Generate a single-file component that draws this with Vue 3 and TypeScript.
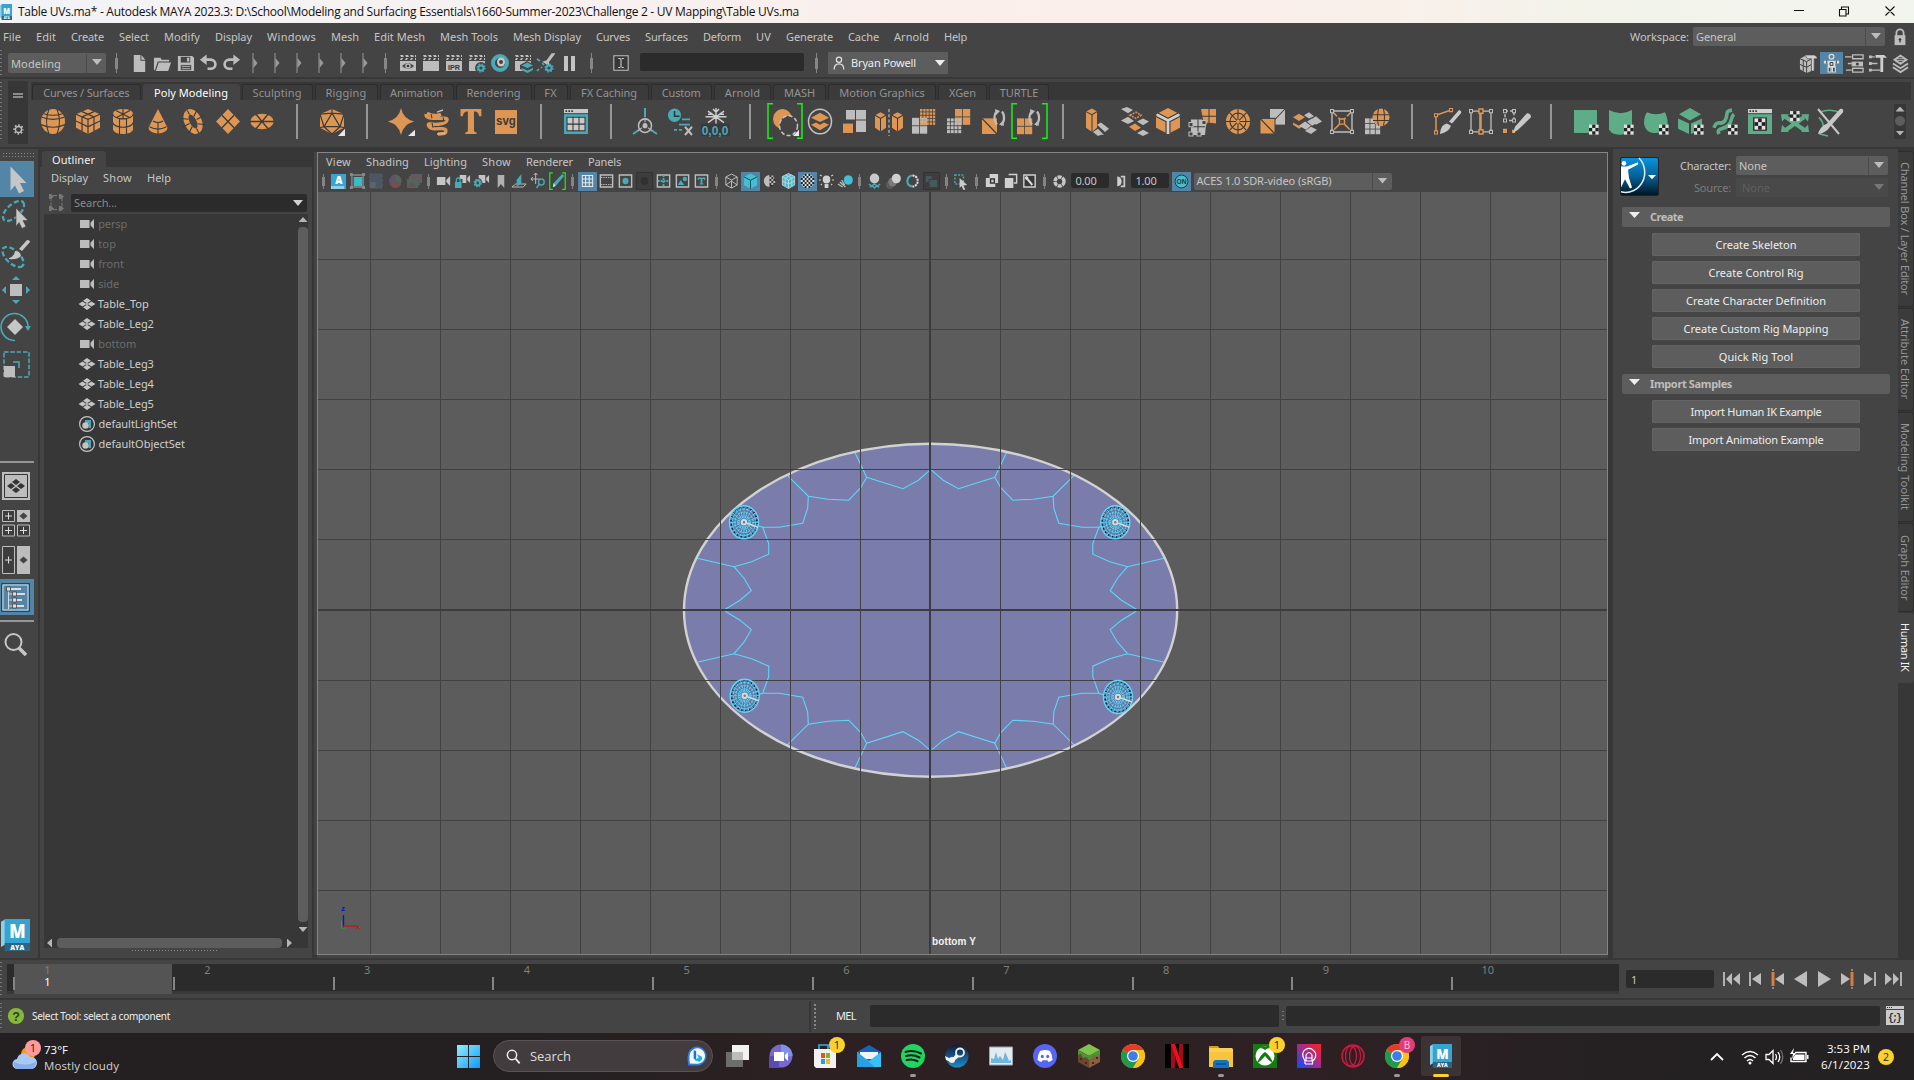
<script setup lang="ts">
import { h } from 'vue'

const O = '#de9654'
const G = '#bdbdbd'
const T = '#49a9b6'
const N = '#5fad88'
const D = '#3a3a3a'

const clap = `<path d="M2 2h3l1 2H3zM7 2h3l1 2H8zM12 2h3l1 2h-3zM3 5h2l-1 2H2zM8 5h2l-1 2H7zM13 5h2l-1 2h-2zM17 2h1v2h-1zM17 5h1v2h-1z" fill="${G}"/><path d="M2 8h16v10H2z" fill="${G}"/>`
const gear = (x: number, y: number, r: number, c: string) =>
  `<circle cx="${x}" cy="${y}" r="${r}" fill="none" stroke="${c}" stroke-width="2"/><circle cx="${x}" cy="${y}" r="${r + 1.3}" fill="none" stroke="${c}" stroke-width="1.4" stroke-dasharray="1.6 ${(((r + 1.3) * 6.283) / 8 - 1.6).toFixed(2)}"/>`
const checker = (x: number, y: number, s = 3.2) => {
  let out = `<rect x="${x}" y="${y}" width="${s * 3}" height="${s * 3}" fill="#e2e2e2"/>`
  for (const [a, b] of [[1, 0], [0, 1], [2, 1], [1, 2]]) out += `<rect x="${x + a * s}" y="${y + b * s}" width="${s}" height="${s}" fill="#222"/>`
  return out
}
const grid = (x: number, y: number, s: number, n: number, c: string) => {
  let out = ''
  const k = s / n
  for (let i = 0; i < n; i++) for (let j = 0; j < n; j++) out += `<rect x="${x + i * k}" y="${y + j * k}" width="${k - 0.8}" height="${k - 0.8}" fill="${c}"/>`
  return out
}
const ballChecks = () => {
  let out = ''
  for (let i = 0; i < 7; i++)
    for (let j = 0; j < 7; j++) {
      const x = 2 + i * 2
      const y = 2 + j * 2
      if ((i + j) % 2 === 0 && Math.hypot(x + 1 - 9, y + 1 - 9) < 6.6) out += `<rect x="${x}" y="${y}" width="2" height="2" fill="#1e2a33"/>`
    }
  return out
}
const spin = `<path d="M15 2a6 8 0 0 0 0 13M20 2.500a6 8 0 0 1-1 13" fill="none" stroke="${G}" stroke-width="2.200"/><path d="M13 0l5 2-4 4zM22 16l-5-1 4-4z" fill="${G}"/>`
const mayaLogo = (top: string) =>
  `<path d="M0 2l4-2v19l-4 2z" fill="#8fd0e6"/><path d="M3 0h21v18H3z" fill="${top}"/><path d="M3 18h21v6H3z" fill="#2b6580"/><text x="13.500" y="14.500" font-family="Open Sans,sans-serif" font-size="14" font-weight="800" fill="#fff" text-anchor="middle">M</text><text x="13.500" y="23" font-family="Open Sans,sans-serif" font-size="5.500" font-weight="800" fill="#fff" text-anchor="middle">AYA</text>`
const chrome = `<circle cx="12" cy="12" r="12" fill="#fbc116"/><path d="M12 12L1.600 6A12 12 0 0 1 22.400 6z" fill="#e33b2e"/><path d="M12 12L1.600 6A12 12 0 0 0 12 24l5.500-9z" fill="#229a4c"/><path d="M12 6h10.400A12 12 0 0 1 12 24l6-10z" fill="#fbc116"/><circle cx="12" cy="12" r="6" fill="#fff"/><circle cx="12" cy="12" r="4.800" fill="#3b7ded"/>`

const icons: Record<string, string> = {
  /* shelf, 24 box */
  sphere: `<circle cx="12" cy="12" r="12" fill="${O}"/><path d="M1 8q11 4 22 0M0 15q12 5 24 0M8 0q-5 12 0 24M16 0q5 12 0 24M3 4.500q9 3 18 0" fill="none" stroke="${D}" stroke-width="1.100"/>`,
  cube: `<path d="M12 0l12 5v13l-12 6-12-6V5z" fill="${O}"/><path d="M0 5l12 5 12-5M12 10v14M6 2.500l12 5V21M18 2.500l-12 5V21M0 11.500l12 5.500 12-5.500" fill="none" stroke="${D}" stroke-width="1.200"/>`,
  cylinder: `<path d="M2 4.500a10 4.500 0 0 1 20 0v15a10 4.500 0 0 1-20 0z" fill="${O}"/><path d="M2 5a10 4.500 0 0 0 20 0M2 13a10 4.500 0 0 0 20 0M8.500 9v15M15.500 9v15M12 0v9.500M5 1.500l14 7M19 1.500l-14 7" fill="none" stroke="${D}" stroke-width="1.100"/>`,
  cone: `<path d="M12 0l9.500 18a9.500 5.500 0 0 1-19 0z" fill="${O}"/><path d="M7 11.500q5 3 10 0M3.500 17q8.500 4.500 17 0M12 13v11" fill="none" stroke="${D}" stroke-width="1.100"/>`,
  torus: `<g transform="rotate(-28 12 12)"><ellipse cx="12" cy="12" rx="6" ry="10" fill="none" stroke="${O}" stroke-width="5.200"/><path d="M0 12h8M16 12h8M12 0v4.500M12 19.500v5M3 4l6 4M21 4l-6 4M3 20l6-4M21 20l-6-4" stroke="${D}" stroke-width="1.100"/></g>`,
  plane: `<path d="M12 0l12 12-12 12L0 12z" fill="${O}"/><path d="M6 6l12 12M18 6L6 18" stroke="${D}" stroke-width="1.300"/>`,
  disc: `<ellipse cx="12" cy="12" rx="11.500" ry="7.500" fill="${O}"/><path d="M0 12h24M6 5l12 14M18 5L6 19" stroke="${D}" stroke-width="1.300"/>`,
  icosa: `<path d="M12 0l12 5v13l-12 6-12-6V5z" fill="${O}"/><path d="M12 4l8 13H4zM12 0v4M0 5l12-1 12 1M0 5l4 12M24 5l-4 12M0 18l4-1 8 7 8-7 4 1" fill="none" stroke="${D}" stroke-width="1.200"/><path d="M25 19v7h-7z" fill="#e8e8e8"/>`,
  star: `<path d="M11 -1q2 10 13 13-11 3-13 13Q9 15-2 12 9 9 11-1z" fill="${O}"/><path d="M25 20v6h-7z" fill="#e8e8e8"/>`,
  spiral: `<path d="M2 4q8 4 14 1M1 5c-1 4 6 4 12 4s10-1 9 2-10 5-17 3M5 14c-4 0-1 5 5 5s11-1 11 2-4 3-8 3" fill="none" stroke="${O}" stroke-width="3.200"/><path d="M12 3l6-2M12 24l8-1" stroke="${G}" stroke-width="1.500"/><path d="M6 5l1 4M18 8l1 4M7 13l1 5" stroke="${D}" stroke-width="1"/>`,
  type: `<path d="M0 0h24v7h-2.500q-1-4.500-5-4.500h-1V20q0 2.500 3 2.500V24h-13v-1.500q3 0 3-2.500V2.500h-1q-4 0-5 4.500H0z" transform="translate(1.500 0) scale(.87 1)" fill="${O}"/>`,
  svg: `<rect x="1" y="1" width="22" height="23" fill="${O}"/><text x="12" y="15.500" text-anchor="middle" font-family="Liberation Sans,sans-serif" font-weight="700" font-size="11.500" fill="#3a3a3a">svg</text>`,
  gridwin: `<path d="M0 0h24v4H0z" fill="#c9c9c9"/><path d="M1.500 1.300h1.600v1.500H1.500zM4.400 1.300H6v1.500H4.400zM7.300 1.300h1.600v1.500H7.300z" fill="#333"/><path d="M0 5h24v19H0z" fill="${T}"/><path d="M2.500 7.500h19v14h-19z" fill="#333"/><path d="M3.500 8.500h5v5.500h-5zM9.500 8.500h5v5.500h-5zM15.500 8.500h5v5.500h-5zM3.500 15h5v5.500h-5zM9.500 15h5v5.500h-5zM15.500 15h5v5.500h-5z" fill="#c9c9c9"/>`,
  target: `<circle cx="12" cy="16" r="6.500" fill="none" stroke="${G}" stroke-width="1.500"/><circle cx="12" cy="16" r="2.500" fill="${G}"/><path d="M12 -1v9M6 20l-6 4M18 20l6 4" stroke="${T}" stroke-width="2"/><path d="M12 9v4M5 21l4-3M19 21l-4-3" stroke="${G}" stroke-width="1"/>`,
  history: `<circle cx="6.500" cy="6" r="6.500" fill="${T}"/><path d="M6.500 2v5h5" fill="none" stroke="#333" stroke-width="1.500"/><path d="M14 10h8M11 15h11M6 20h3M11 20h3" stroke="${T}" stroke-width="1.600"/><path d="M17 17l7 8M24 17l-7 8" stroke="${G}" stroke-width="2"/>`,
  freeze: `<path d="M13 -1v16M5 2l16 11M21 2L5 13M2.500 7.500h21M10 0l3 3 3-3M5 5l3 0M18 5h3" stroke="#d0d0d0" stroke-width="1.400" fill="none"/><rect x="-2" y="14" width="29" height="12" fill="#3a3a3a"/><text x="12" y="24.500" text-anchor="middle" font-family="Liberation Sans,sans-serif" font-weight="700" font-size="12" fill="${T}">0,0,0</text>`,
  bool: `<circle cx="9.500" cy="9.500" r="9.500" fill="${O}"/><ellipse cx="15.500" cy="16" rx="9" ry="9.500" fill="#444" stroke="#c4c4c4" stroke-width="1.500" stroke-dasharray="4 2.200"/><path d="M26 20v6h-6z" fill="#e8e8e8"/><path d="M0-5H-5V28H0M24-5h5V28h-5" fill="none" stroke="#12f312" stroke-width="1.500"/>`,
  combine: `<ellipse cx="12" cy="12" rx="11.500" ry="11.800" fill="none" stroke="#c4c4c4" stroke-width="1.500"/><path d="M3 8.500l9-5 9 5-9 4z" fill="${O}"/><path d="M3 15l5-2 4 2 4-2 5 2-9 5.500z" fill="${O}"/>`,
  separate: `<path d="M4 1h9v9H4zM14 1h10v9H14zM14 11h10v11H14z" fill="${G}"/><path d="M1 14h10v9H1z" fill="${O}"/>`,
  mirror: `<path d="M-2 6l5.500-3L9 6v12l-5.500 3.500L-2 18zM15 6l5.500-3L26 6v12l-5.500 3.500L15 18z" fill="${O}"/><path d="M-2 6l5.500 3L9 6M3.500 9v12.500M15 6l5.500 3L26 6M20.500 9v12.500" fill="none" stroke="${D}"/><path d="M12 0v26" stroke="#d0d0d0" stroke-dasharray="3 2"/>`,
  smooth: `${grid(0, 8.5, 16, 2, G)}${grid(8, 0, 16, 5, O)}`,
  reduce: `${grid(8, 0, 16, 2, O)}${grid(0, 9, 15, 4, G)}`,
  remesh: `<path d="M0 9h15v15H0z" fill="${O}"/><path d="M0 9l15 15" stroke="${D}" stroke-width="1.300"/>${spin}`,
  retopo: `${grid(0, 9, 16, 2, O)}${spin}<path d="M0-5H-5V28H0M25-5h5V28h-5" fill="none" stroke="#12f312" stroke-width="1.500"/>`,
  extrude: `<path d="M0 2.500L6-.500l5 3V18l-5 4-6-4z" fill="${O}"/><path d="M0 2.500l6 3 5-3M6 5.500V22" fill="none" stroke="${D}"/><path d="M11 15l4-2 8 6-4 3zM14 21l4 4-5-1zM7 22l5-3 5 5-5 2z" fill="${G}"/>`,
  bridge: `<path d="M0 0l6-2 6 3-5 3zM16 12l6-3 6 3-6 3.500zM0 11l7-3.500 6 4-6 3zM16 23l6-3 6 3-6 3z" fill="${G}"/><path d="M8 17l6-3 6 4-6 3z" fill="${O}"/><path d="M9 6l6-3 5 3-5 3z" fill="none" stroke="${O}" stroke-width="1.500" stroke-dasharray="2 1"/>`,
  bevel: `<path d="M12-1l12 6v13l-12 6L0 18V5z" fill="${O}"/><path d="M1 5.500l11 5.500 11-5.500M12 11v13" fill="none" stroke="${D}" stroke-width="5"/><path d="M1 5.500l11 5.500 11-5.500M12 11v13" fill="none" stroke="#cfcfcf" stroke-width="2.800"/>`,
  merge: `<path d="M10 0h15v14l-8-1-4 2z" fill="${O}"/><path d="M18 0v13M11 7h14" stroke="${D}"/><path d="M0 10h11l4 5-1 10H0z" fill="${G}"/><path d="M7 10v15M0 17h14" stroke="${D}"/><path d="M-2 13h4v4h-4zM-2 22h4v4h-4zM6 22h4v4H6zM11 11h4v4h-4z" fill="#444" stroke="${G}"/>`,
  wheel: `<circle cx="12" cy="12" r="12" fill="${O}"/><circle cx="12" cy="12" r="8" fill="none" stroke="${D}" stroke-width="1.100"/><path d="M12 0v24M0 12h24M3.500 3.500l17 17M20.500 3.500l-17 17" stroke="${D}" stroke-width="1.100"/><circle cx="12" cy="12" r="1.800" fill="${O}"/>`,
  flip: `<path d="M10 0h15v15H10z" fill="${G}"/><path d="M25 0L10 15" stroke="${D}"/><path d="M0 9h15v15H0z" fill="${O}" stroke="#444"/><path d="M0 9l15 15" stroke="${D}" stroke-width="1.200"/>`,
  collapse: `<path d="M-2 8l6-3.500L10 8l-6 3.500zM-2 13l6 3 6-3v2l-6 4-6-4z" fill="${O}"/><path d="M9 6l5-3 5 4-5 2zM16 10l5-3 6 5-6 3zM4 16l6-4 6 4-5 4zM12 12l5-3 6 4-6 3zM10 21l6-4 6 3-6 4z" fill="${G}"/>`,
  cage: `<path d="M2 2l20 20M22 2L2 22" stroke="${O}" stroke-width="1.500" stroke-dasharray="7 2"/><path d="M2 2h20v20H2z" fill="none" stroke="${G}" stroke-width="1.400"/><path d="M.500.500h3v3h-3zM20.500.500h3v3h-3zM.500 20.500h3v3h-3zM20.500 20.500h3v3h-3z" fill="#444" stroke="${G}"/><path d="M9.500 9.500h5v5h-5z" fill="#444" stroke="${O}" stroke-width="1.400"/>`,
  project: `${grid(0, 9, 16, 3, G)}<circle cx="16" cy="8" r="8.500" fill="${O}"/><path d="M8 5.500h16M8 11h16M13.500 0q-2 8 0 16M18.500 0q2 8 0 16" fill="none" stroke="${D}"/>`,
  multicut: `<path d="M1 22V6L16 1" fill="none" stroke="${O}" stroke-width="1.500"/><path d="M-.500 4.500h3v3h-3zM-.500 21h3v3h-3zM14.500-.500h3v3h-3z" fill="#444" stroke="${O}"/><path d="M5 23q1-8 7-9l4 2q-2 6-11 8zM14 12L24 1q3 1 2 3l-9 10z" fill="#c8c8c8"/>`,
  edgeloop: `<path d="M2 2h9v20H2zM13 2h9v20h-9" fill="none" stroke="${G}" stroke-width="1.300"/><path d="M12 1v22" stroke="${O}" stroke-width="1.500"/><path d="M.500.500h3v3h-3zM20.500.500h3v3h-3zM.500 20.500h3v3h-3zM20.500 20.500h3v3h-3z" fill="#444" stroke="${G}"/><path d="M10 0h4v4h-4zM10 20h4v4h-4z" fill="#444" stroke="${O}" stroke-width="1.400"/>`,
  quaddraw: `<path d="M1 2h9v9H1z" fill="none" stroke="${G}" stroke-width="1.500" stroke-dasharray="3 2"/><path d="M-.500.500h3v3h-3zM8.500.500h3v3h-3zM-.500 9.500h3v3h-3zM8.500 9.500h3v3h-3z" fill="#444" stroke="${G}"/><path d="M-1 19h4v4h-4zM8 20h3v3H8z" fill="${O}"/><path d="M9 23l2-6 12-13q4 0 4 4L14 20z" fill="#c8c8c8"/>`,
  uv1: `<path d="M0 1h23v22H0z" fill="${N}"/>${checker(15, 15)}`,
  uv2: `<path d="M0 1q12 6 23 0v20q-11 6-20 2l-3-3z" fill="${N}"/>${checker(15, 15)}`,
  uv3: `<path d="M3 3q9 4 18 0 4 8 2 15-4 6-14 5-8-1-9-9 0-7 3-11z" fill="${N}"/>${checker(15, 15)}`,
  uv4: `<path d="M12-1l11 6-11 6L1 5zM0 9l11 5v10L0 19zM13 14l11-5v10l-11 5z" fill="${N}"/>${checker(16, 15)}`,
  uv5: `<path d="M1 18c3-9 7-1 11-7s-1-9 7-10M6 24c-3-6 4-4 9-8s2-8 6-11" fill="none" stroke="${N}" stroke-width="3.600"/>${checker(15, 15)}`,
  uv6: `<path d="M0 0h24v4H0z" fill="#d0d0d0"/><path d="M1.500 1.300h1.600v1.500H1.500zM4.400 1.300H6v1.500H4.400zM7.300 1.300h1.600v1.500H7.300z" fill="#333"/><path d="M0 5h24v19H0z" fill="${N}"/><path d="M5 8h14v13H5z" fill="#333"/>${checker(6.5, 9, 3.6)}`,
  uv7: `<path d="M3 8l18 12M21 8L3 20" stroke="${N}" stroke-width="4"/><path d="M-2 5h8l-7 7zM26 5h-8l7 7zM-2 22h8l-7-7zM26 22h-8l7-7z" fill="${N}"/>${checker(7, 2)}`,
  uv8: `<path d="M2 3q10-4 22 1M1 8q8 8 1 16l8 2" fill="none" stroke="${N}" stroke-width="1.500"/><path d="M0 24q2-7 9-10L22 0q4-1 3 3L12 17Q8 23 0 24z" fill="#c8c8c8"/><path d="M0 0l21 24" stroke="#c8c8c8" stroke-width="2"/>`,

  /* status line, 20 box */
  new: `<path d="M4 1h7v6h5v12H4zM12 1l4 5h-4z" fill="${G}"/>`,
  open: `<path d="M1 4h7l1 2h8v2H5l-3 9H1z" fill="${G}"/><path d="M6 9h13l-3 9H3z" fill="${G}"/>`,
  save: `<path d="M2 2h15l2 2v14H2z" fill="${G}"/><path d="M5 3h10v6H5z" fill="#444"/><path d="M11.500 4H14v4h-2.500z" fill="${G}"/><path d="M5 11.500h11V17H5z" fill="#444"/><path d="M6 13h9M6 15.500h9" stroke="${G}"/>`,
  undo: `<path d="M6 6h6a5 4.500 0 0 1 0 9.500h-3" fill="none" stroke="${G}" stroke-width="2.800"/><path d="M1 6l7-5.500v11z" fill="${G}"/>`,
  redo: `<path d="M14 6H8a5 4.500 0 0 0 0 9.500h3" fill="none" stroke="${G}" stroke-width="2.800"/><path d="M19 6l-7-5.500v11z" fill="${G}"/>`,
  chev: `<path d="M8 0v20" stroke="#8a8a8a" stroke-width="1.200"/><path d="M8.500 5l4 5-4 5z" fill="#999"/>`,
  r1: `${clap}<path d="M4 13q6-6 12 0-6 6-12 0z" fill="#444"/><circle cx="10" cy="13" r="2.800" fill="${G}"/><circle cx="10" cy="13" r="1.300" fill="#333"/>`,
  r2: clap,
  r3: `${clap}<text x="10" y="16.500" text-anchor="middle" font-family="Liberation Sans,sans-serif" font-weight="700" font-size="8" textLength="12" lengthAdjust="spacingAndGlyphs" fill="#333">IPR</text>`,
  r4: `${clap}<circle cx="14" cy="15" r="6" fill="#444"/>${gear(14, 15, 2.6, T)}`,
  r5: `<circle cx="10" cy="10" r="7" fill="none" stroke="${T}" stroke-width="4"/><ellipse cx="11" cy="9" rx="4" ry="4.500" fill="#c8c8c8"/><circle cx="11" cy="9" r="2" fill="#444"/>`,
  r6: `${clap}<path d="M7 12l7-4 6 3v5l-6 4-7-4z" fill="#444"/><path d="M8.500 12.500l6-3 5.500 3-5.500 2.500zM8.500 15l6 2.500 5.500-2.500v2l-5.500 3-6-3z" fill="${T}"/>`,
  r7: `<path d="M18 1l-6 8 1 3-5-3 3-1 5-7z" fill="${G}" stroke="${G}" stroke-width="1.500"/><path d="M1 6l3 2M6 10l2 2M1 18l2-2M5 14l1 1" stroke="${T}" stroke-width="1.700"/>${gear(13, 15, 2.6, T)}`,
  r8: `<path d="M5 3h4v15H5zM12 3h4v15h-4z" fill="#c4c4c4"/>`,
  caret: `<path d="M2 2h16v16H2z" fill="#383838" stroke="${G}" stroke-width="1.200"/><path d="M7 5h2l1 1 1-1h2M7 15h2l1-1 1 1h2M10 6v8" fill="none" stroke="#ddd" stroke-width="1.100"/>`,
  user: `<circle cx="10" cy="6" r="3.300" fill="none" stroke="#e4e4e4" stroke-width="1.500"/><path d="M4 18q0-7 6-7t6 7" fill="none" stroke="#e4e4e4" stroke-width="1.500"/>`,
  w1: `<path d="M1 5l7-4 5 2v15l-5 2-7-4z" fill="${G}"/><path d="M1 5l7 3 5-3M8 8v12M4.500 6v12M1 11l7 3 5-3" fill="none" stroke="${D}"/><path d="M6 1h10l3 2v2h-3v13h-3V5H9z" fill="#cfcfcf" stroke="#444" stroke-width=".7"/>`,
  w2: `<circle cx="10" cy="3" r="2.500" fill="#5285a6" stroke="#ddd" stroke-width="1.300"/><path d="M2 7h16v3h-4v4h-8v-4H2z" fill="#dedede"/><path d="M6.500 14h3v5h-3zM11 14h3v5h-3z" fill="#444" stroke="#ddd" stroke-width="1.200"/><path d="M8.500 9h3v3h-3zM5 7v3M15 7v3" fill="none" stroke="#333"/>`,
  w3: `<path d="M0 3h7M3 10h4M1 17h6" stroke="${G}" stroke-width="1.500"/><path d="M8 1h11v4H8zM8 15h11v4H8z" fill="none" stroke="${G}" stroke-width="1.400"/><path d="M7 8h12v5H7z" fill="${G}"/><circle cx="13" cy="10.500" r="1.600" fill="#444"/>`,
  w4: `<path d="M3 3h4M3 10h7M3 17h10" stroke="${G}" stroke-width="1.500"/><path d="M1 1.500h3v3H1zM1 8.500h3v3H1zM1 15.500h3v3H1z" fill="${G}"/><path d="M8 1h9l3 3h-4v15h-3V4H8z" fill="#cfcfcf"/>`,
  w5: `<path d="M2 6l8-5.500L18 6l-8 5.500z" fill="${G}"/><path d="M2 10l8 5 8-5M2 14l8 5 8-5" fill="none" stroke="${G}" stroke-width="2"/><path d="M6 6h8M8 4h4M8 8h4" stroke="${D}"/>`,
  lock: `<path d="M6 9V5.500a4 4 0 0 1 8 0V9" fill="none" stroke="${G}" stroke-width="2"/><path d="M4 8h12v11H4z" fill="${G}"/><path d="M10 11v5M8.500 13h3" stroke="#333" stroke-width="1.400"/>`,
  cog: `<circle cx="10" cy="10" r="5.500" fill="none" stroke="${G}" stroke-width="2.600"/><circle cx="10" cy="10" r="8" fill="none" stroke="${G}" stroke-width="3" stroke-dasharray="3 3.283" stroke-dashoffset="1.500"/>`,

  /* tool box, 32 box */
  arrow: `<path d="M10.500 3.500l16 16.500h-6.500l4 8-5 2.500-4-8-4.500 5z" fill="#c6c6c6"/>`,
  lasso: `<ellipse cx="13.500" cy="11" rx="13" ry="6.500" transform="rotate(-42 13.500 11)" fill="none" stroke="${T}" stroke-width="2.300" stroke-dasharray="5 2.500"/><path d="M16 8l12 12.500h-5l3 6-4 2-3-6-3 4z" fill="#c6c6c6" stroke="#444" stroke-width=".6"/>`,
  paint: `<ellipse cx="13" cy="20" rx="13" ry="6.500" transform="rotate(43 13 20)" fill="none" stroke="${T}" stroke-width="2.300" stroke-dasharray="5 2.500"/><path d="M9 21q5-1 6-7 5 0 6 5-4 4-12 3zM19 12l8-9q3 0 3 2l-8 9z" fill="#c6c6c6"/>`,
  move: `<path d="M10 10h12v12H10z" fill="${G}"/><path d="M16 2l4 4h-8zM16 30l4-4h-8zM2 16l4-4v8zM30 16l-4-4v8z" fill="${T}"/>`,
  rotate: `<path d="M15 8l8 8-8 8-8-8z" fill="#c6c6c6"/><path d="M15 29.500A13.500 13.500 0 1 1 28 15" fill="none" stroke="${T}" stroke-width="1.600"/><path d="M25 15h6l-3 5z" fill="${T}"/>`,
  scale: `<path d="M4 4h25v25H4z" fill="none" stroke="${T}" stroke-width="1.500" stroke-dasharray="4.500 1.800"/><path d="M4 18h11v11H4z" fill="${G}"/><path d="M13 14h6v6" fill="none" stroke="${T}" stroke-width="1.500"/>`,
  lay1: `<path d="M2 2h28v28H2z" fill="${G}"/><path d="M4.500 4.500h23v23h-23z" fill="none" stroke="#333"/><path d="M16 9l4 3-4 3-4-3zM11 13l4 3-4 3-4-3zM21 13l4 3-4 3-4-3zM16 17l4 3-4 3-4-3z" fill="#333"/>`,
  lay2: `<path d="M2.500 3.500h12v11h-12zM2.500 18h12v11h-12zM17.500 18h12v11h-12z" fill="#3d3d3d" stroke="${G}"/><path d="M17 3h13v12H17z" fill="${G}"/><path d="M23.500 5.500l4 3.500-4 3.500-4-3.500z" fill="#444"/><path d="M5 9h7M8.500 5.500v7M5 23.500h7M8.500 20v7M20 23.500h7M23.500 20v7" stroke="#ddd"/>`,
  lay3: `<path d="M2.500 2.500h12v27h-12z" fill="#3d3d3d" stroke="${G}"/><path d="M17 2h13v28H17z" fill="${G}"/><path d="M23.500 12.500l4 3.500-4 3.500-4-3.500z" fill="#444"/><path d="M5 16h7M8.500 12.500v7" stroke="#ddd"/>`,
  lay4: `<path d="M1.500 2.500h28v28h-28z" fill="none" stroke="#2c4152"/><path d="M3 4h25v25H3z" fill="none" stroke="#d8d8d8"/><path d="M8.500 10v18M9 13h4M9 19h4M9 25h4" stroke="#d8d8d8"/><path d="M11 8h10M16 13h9M16 19h6M16 25h8" stroke="#ddd" stroke-width="2"/><path d="M6.500 6h4v4h-4zM12.500 11h4v4h-4zM12.500 17h4v4h-4zM12.500 23h4v4h-4z" fill="#ddd" stroke="#333" stroke-width=".7"/>`,
  find: `<circle cx="13.500" cy="13" r="8" fill="none" stroke="#c6c6c6" stroke-width="2"/><path d="M19 19l7 7" stroke="#c6c6c6" stroke-width="3.500"/>`,

  /* outliner, 16 box */
  cam: `<path d="M0 4h9.500v8H0zM10.500 6.500L14 3v10l-3.500-3.500z" fill="${G}"/>`,
  mesh: `<path d="M8 2l4 2.700-4 2.600-4-2.600zM3.500 5.400L7.500 8l-4 2.600L-.500 8zM12.500 5.400l4 2.600-4 2.600-4-2.600zM8 8.700l4 2.600L8 14l-4-2.700z" fill="#c4c4c4"/><circle cx="8" cy="8" r="1" fill="#c4c4c4"/>`,
  set: `<circle cx="8" cy="8" r="7.400" fill="none" stroke="#c4c4c4" stroke-width="1.200"/><path d="M6 4h6v8H9.500V7H6z" fill="${T}"/><circle cx="6.500" cy="9.500" r="3.200" fill="#c4c4c4"/>`,
  filt: `<path d="M2 2v11M13 2v11M4 .500h6M4 14.500h6" stroke="#777" stroke-width="1" stroke-dasharray="4 1.500"/><path d="M0-1h2l3 2.500-3 2.500H0zM10-1h2l3 2.500-3 2.500h-2zM0 11h2l3 2.500L2 16H0zM10 11h2l3 2.500-3 2.500h-2z" fill="#777"/>`,

  /* panel toolbar, 18 box */
  v1: `<path d="M1 2h16v15H1z" fill="#3aa3d0"/><path d="M1 14h14v3H1z" fill="#8fd0e6"/><text x="9.500" y="12.500" text-anchor="middle" font-family="Open Sans,sans-serif" font-weight="800" font-size="10.500" fill="#fff">A</text>`,
  v2: `<path d="M3 3h12v12H3z" fill="none" stroke="#777" stroke-width="2"/><path d="M5 5h9v9H5z" fill="#35bcc8"/><path d="M1 1h3v3H1zM14 1h3v3h-3zM1 14h3v3H1zM14 14h3v3h-3z" fill="#888"/>`,
  v3: `<path d="M2 2h13v14H2z" fill="#4c5562" stroke="#565f6c" stroke-dasharray="3 1.500"/><path d="M2 10h6v6H2z" fill="#5c6470"/>`,
  v4: `<circle cx="9" cy="9" r="6.500" fill="#566358"/><path d="M9 9V2.500a6.500 6.500 0 0 0-6 9z" fill="#5c5468"/><path d="M9 9l6 3a6.500 6.500 0 0 1-12 0z" fill="#72504f"/>`,
  v5: `<path d="M5 2h12v9H5z" fill="#5c5c62"/><path d="M3 4h12v9H3z" fill="#66595a"/><path d="M1 7h12v9H1z" fill="#4e6660"/><path d="M2 15l4-5 5 5z" fill="#6b5151"/>`,
  v6: `<path d="M2 5h9v8H2zM12 8l4-4v10l-4-4z" fill="#c4c4c4"/>`,
  v7: `<path d="M6 3h7v8H6zM14 6l3-3v8l-3-3z" fill="#c4c4c4"/><path d="M0 7h9v10H0z" fill="#444"/><path d="M1 10h7v6H1z" fill="${T}"/><path d="M2.500 10V8a2 2 0 0 1 4 0v2" stroke="${T}" stroke-width="1.300" fill="none"/>`,
  v8: `<path d="M6 3h7v8H6zM14 6l3-3v8l-3-3z" fill="#c4c4c4"/><circle cx="5" cy="11" r="5" fill="#444"/>${gear(5, 11, 2.4, T)}`,
  v9: `<path d="M6 3h7v13l-3.500-4L6 16z" fill="#b0b0b0"/>`,
  v10: `<path d="M1 15l4-3h11l-3 3z" fill="none" stroke="${G}"/><path d="M6 12V8l5-6v9l-5 4z" fill="${T}"/>`,
  v11: `<path d="M6 1v11M1 7h9M4 3l2-2 2 2M3 5L1 7l2 2" fill="none" stroke="${G}"/><circle cx="12" cy="10" r="3" fill="none" stroke="${T}" stroke-width="1.500"/><path d="M9.500 12.500L7 16" stroke="${T}" stroke-width="1.700"/>`,
  v12: `<path d="M4 15l1-4 9-9 2 2-9 10z" fill="${T}"/><path d="M4 15l1-4 2 3z" fill="#ddd"/><path d="M4 .800H.800v16.500H4M14 .800h3.200v16.500H14" fill="none" stroke="#12f312" stroke-width="1.300"/>`,
  v13: `<path d="M3.500 3.500h11v11h-11zM7 3.500v11M10.800 3.500v11M3.500 7h11M3.500 10.800h11" fill="none" stroke="#e8e8e8" stroke-width="1.100"/>`,
  v14: `<path d="M2.500 3h13v12h-13z" fill="#444" stroke="${G}" stroke-width="1.500"/><path d="M3 5.500h12M3 12.500h12" stroke="${G}" stroke-dasharray="1.500 1"/>`,
  v15: `<path d="M2.500 3h13v12h-13z" fill="#444" stroke="${G}" stroke-width="1.500"/><circle cx="9" cy="9" r="3.200" fill="${T}"/>`,
  v16: `<path d="M.500.500h17v17H.500z" fill="#3d3d3d" stroke="#333"/><circle cx="9" cy="9" r="4" fill="#303030"/>`,
  v17: `<path d="M2.500 3h13v12h-13z" fill="#444" stroke="${G}" stroke-width="1.500"/><path d="M9 3v12M3 9h12" stroke="${T}" stroke-width="2" stroke-dasharray="2 1"/>`,
  v18: `<path d="M2.500 3h13v12h-13z" fill="#444" stroke="${G}" stroke-width="1.500"/><path d="M4 13l3-5 4 5z" fill="${T}"/><circle cx="11.500" cy="7" r="2.300" fill="${T}"/>`,
  v19: `<path d="M2.500 3h13v12h-13z" fill="#444" stroke="${G}" stroke-width="1.500"/><path d="M5 5.500h8V8h-1l-.500-1H10v4.500h1v1H7v-1h1V7H6.500L6 8H5z" fill="${T}"/>`,
  v20: `<path d="M9 2l6 3v8l-6 3-6-3V5zM3 5l6 3 6-3M9 8v8M3 13l6-4 6 4" fill="none" stroke="${G}"/>`,
  v21: `<path d="M9 1.500l7 3.300v8.500L9 16.800l-7-3.500V4.800z" fill="#42bfd0"/><path d="M2 4.800l7 3.500 7-3.500M9 8.300v8.500" fill="none" stroke="#1d4a57"/>`,
  v22: `<circle cx="9" cy="9" r="6" fill="#333"/><path d="M9 3a6 6 0 0 0 0 12z" fill="${G}"/><path d="M9 5h2v2H9zM11 7h2v2h-2zM9 9h2v2H9zM11 11h2v2h-2zM11 3.500h2V5h-2zM13 5h1v2h-1zM13 9h2v2h-2z" fill="${G}"/>`,
  v23: `<path d="M9 1.500l6.500 3v8.500L9 16.500 2.500 13V4.500z" fill="#42bfd0"/><path d="M9 1.500l6.500 3v8.500L9 16.500 2.500 13V4.500zM2.500 4.500L9 8l6.500-3.500M9 8v8M6 3l6.500 3v8M12 3L5.500 6v8M2.500 9L9 12l6.500-3" fill="none" stroke="#c8d4d6" stroke-width=".9"/>`,
  v24: `<circle cx="9" cy="9" r="7.200" fill="#d6dcdf"/>${ballChecks()}`,
  v25: `<circle cx="9" cy="7.500" r="4" fill="#d0d0d0"/><path d="M7 12h4v4H7z" fill="#d0d0d0"/><path d="M1 8h2M15 8h2M2 3l2 1M16 3l-2 1M3 13l1-1M15 13l-1-1" stroke="#d0d0d0" stroke-width="1.200"/>`,
  v26: `<circle cx="12" cy="8" r="4.800" fill="#42bfd0"/><path d="M3 10l6 5M1 12l5 3M5 8l3 5" stroke="${G}" stroke-width="1.400"/>`,
  v27: `<circle cx="9" cy="6.500" r="5" fill="#c8c8c8"/><path d="M3 12l3 2 3-2 3 2 3-2M4 15l3-1 2 2 2-2 3 1" fill="none" stroke="${T}" stroke-width="1.500"/>`,
  v28: `<circle cx="5" cy="13" r="4" fill="#5a5a5a"/><circle cx="8" cy="10" r="4.500" fill="#7a7a7a"/><circle cx="12" cy="6.500" r="4.800" fill="#cfcfcf"/>`,
  v29: `<path d="M9 3.500a5.500 5.500 0 0 0 0 11" fill="none" stroke="${T}" stroke-width="2.200"/><path d="M9 3.500a5.500 5.500 0 0 1 0 11" fill="none" stroke="#ddd" stroke-width="2.200" stroke-dasharray="2.200 .8"/>`,
  v30: `<path d="M.500.500h17v17H.500z" fill="#3d3d3d" stroke="#333"/><path d="M3 4h6v3H6v3H3zM7 8h8v7H7z" fill="#46595c"/>`,
  v31: `<path d="M2 3h9v9H2z" fill="none" stroke="${T}" stroke-width="1.500" stroke-dasharray="2 1.500"/><path d="M7 6l8 7-4 .500 2 4-2 .500-2-4-2 2z" fill="#ccc"/>`,
  v32: `<path d="M7 2h9v9h-3v4H3V6h4z" fill="#d0d0d0"/><path d="M8 7h4v4H8z" fill="none" stroke="#333" stroke-width="1.500"/>`,
  v33: `<path d="M7 2.500h8.500V11h-3" fill="none" stroke="#d0d0d0" stroke-width="1.500"/><path d="M3 6h9v10H3z" fill="#d0d0d0"/>`,
  v34: `<path d="M3 3h12v12H3z" fill="#383838" stroke="#d0d0d0" stroke-width="1.500"/><path d="M5 5l7 8" stroke="#ddd" stroke-width="2"/><circle cx="6" cy="6" r="1.800" fill="#ddd"/>`,
  v35: `<circle cx="9" cy="9" r="4.800" fill="none" stroke="#c8c8c8" stroke-width="3.600" stroke-dasharray="4.200 .82"/>`,
  v36: `<path d="M11 3h5v13h-5v-2h3V5h-3z" fill="#c8c8c8"/><path d="M7 4a5 5.500 0 0 1 0 11z" fill="#d0d0d0"/>`,
  v37: `<circle cx="9" cy="9" r="6.800" fill="#42bfd0" stroke="#2c3338"/><text x="9" y="11.500" text-anchor="middle" font-family="Liberation Sans,sans-serif" font-weight="700" font-size="7" fill="#263238">ON</text>`,

  /* playback, 20 box */
  p1: `<path d="M2 3v14" stroke="${G}" stroke-width="1.800"/><path d="M10 4v12l-6-6zM18 4v12l-7-6z" fill="${G}"/>`,
  p2: `<path d="M5 3v14" stroke="${G}" stroke-width="1.800"/><path d="M16 4v12l-9-6z" fill="${G}"/>`,
  p3: `<path d="M5 3v14" stroke="#d87c3f" stroke-width="3"/><path d="M5 0v2M5 18v2" stroke="#ccc"/><path d="M16 4v12l-9-6z" fill="${G}"/>`,
  p4: `<path d="M16 2v16L3 10z" fill="${G}"/>`,
  p5: `<path d="M4 2v16l13-8z" fill="${G}"/>`,
  p6: `<path d="M15 3v14" stroke="#d87c3f" stroke-width="3"/><path d="M15 0v2M15 18v2" stroke="#ccc"/><path d="M4 4v12l9-6z" fill="${G}"/>`,
  p7: `<path d="M15 3v14" stroke="${G}" stroke-width="1.800"/><path d="M4 4v12l9-6z" fill="${G}"/>`,
  p8: `<path d="M18 3v14" stroke="${G}" stroke-width="1.800"/><path d="M10 4v12l6-6zM2 4v12l7-6z" fill="${G}"/>`,
  script: `<path d="M1 0h18v3H1z" fill="#ccc"/><path d="M2 1h1v1H2zM4 1h1v1H4zM6 1h1v1H6z" fill="#333"/><path d="M1 4h18v15H1z" fill="#ccc"/><text x="10" y="14.500" text-anchor="middle" font-family="Liberation Mono,monospace" font-weight="700" font-size="10" textLength="14" fill="#333">{;}</text>`,
  help: `<circle cx="10" cy="10" r="9" fill="#86b83a"/><text x="10" y="15" text-anchor="middle" font-family="Liberation Sans,sans-serif" font-weight="700" font-size="14" fill="#2f3b1c">?</text>`,

  /* task bar, 24 box */
  win: `<defs><linearGradient id="wg" x1="0" y1="0" x2="1" y2="1"><stop offset="0" stop-color="#8df0fb"/><stop offset="1" stop-color="#1398fb"/></linearGradient></defs><path d="M0 0h11.500v11.500H0zM12.500 0H24v11.500H12.500zM0 12.500h11.500V24H0zM12.500 12.500H24V24H12.500z" fill="url(#wg)"/>`,
  mag: `<circle cx="10.500" cy="10.500" r="7" fill="none" stroke="#eee" stroke-width="2.200"/><path d="M15.500 15.500L22 23" stroke="#eee" stroke-width="2.600"/>`,
  bing: `<path d="M1.500 23q-2-12 1-17A11.300 11.300 0 1 1 12 23.300H1.500z" fill="#2e7de0"/><path d="M3.500 21q-1.500-10 1-14A9.300 9.300 0 1 1 12 21.300z" fill="#f4f8ff"/><path d="M8 5l3 1v11l-3-2z" fill="#1976d8"/><path d="M9 17l3-2 2-1-2-4 6 3q1 4-3 6z" fill="#20b5d8"/>`,
  taskview: `<path d="M7 1h17v15H7z" fill="#f2f2f2"/><path d="M1 8h17v15H1z" fill="#6d6d6d"/><path d="M7 8h11v8H7z" fill="#bcbcbc"/>`,
  chat: `<circle cx="12" cy="12" r="11.500" fill="#7868cf"/><path d="M0 24V12h10v12z" fill="#5a4ab4"/><path d="M12 .500A11.500 11.500 0 0 1 23.500 12L12 14z" fill="#7f8fea"/><path d="M5 8h10v9H5zM16 11l3-3v9l-3-3z" fill="#fff"/>`,
  store: `<path d="M6 6V1h9v5" fill="none" stroke="#2fb1f0" stroke-width="1.600"/><path d="M1 5h22v19H3l-2-2z" fill="#f1f1f1"/><path d="M8 9h4v5H8z" fill="#f04e25"/><path d="M13 9h4v5h-4z" fill="#7db81f"/><path d="M8 15h4v5H8z" fill="#1aa0ea"/><path d="M13 15h4v5h-4z" fill="#f9b810"/>`,
  mail: `<path d="M0 8l12-7 12 7v15H0z" fill="#1467b8"/><path d="M3 8h18v7H3z" fill="#f3f3f3"/><path d="M0 8l12 9L24 8v15H0z" fill="#37c1f5"/><path d="M0 8l18 15H0z" fill="#2aa0e4"/>`,
  spotify: `<circle cx="12" cy="12" r="12" fill="#1fd661"/><path d="M4.500 8q8-2.500 15.500 1.500M5 12q7-2 13.500 1.500M5.500 16q6-1.600 11 1.200" fill="none" stroke="#1a1a1a" stroke-width="2" stroke-linecap="round"/>`,
  steam: `<defs><linearGradient id="sg" x1="0" y1="0" x2="0" y2="1"><stop offset="0" stop-color="#10183c"/><stop offset="1" stop-color="#1c8ec8"/></linearGradient></defs><circle cx="12" cy="12" r="11.500" fill="url(#sg)"/><circle cx="15" cy="8.500" r="4" fill="none" stroke="#f2f2f2" stroke-width="1.800"/><path d="M11 10L7 15l2 2 5-4" fill="#f2f2f2"/><circle cx="7" cy="16" r="3" fill="#f2f2f2"/><path d="M0 12l6 3v3l-5-2z" fill="#f2f2f2"/>`,
  monitor: `<path d="M.500 3h23v18H.500z" fill="#e4ebf0" stroke="#9aa4ab"/><path d="M2 19v-5l3 1 2-7 2 7 2-3 3 4 2-8 2 4 2 5 2-1v3z" fill="#6db6e0"/>`,
  discord: `<circle cx="12" cy="12" r="12" fill="#5766f2"/><path d="M7 7q5-2 10 0 2.500 4 2.500 9-2 1.700-4 2l-1-1.700h-5L8.500 18q-2-.300-4-2 0-5 2.500-9z" fill="#fff"/><ellipse cx="9.300" cy="12.500" rx="1.500" ry="1.800" fill="#5766f2"/><ellipse cx="14.700" cy="12.500" rx="1.500" ry="1.800" fill="#5766f2"/>`,
  minecraft: `<path d="M1 6l11-6 11 6-11 6z" fill="#7fc24c"/><path d="M1 6l11 6v12L1 18z" fill="#6b4630"/><path d="M23 6l-11 6v12l11-6z" fill="#8a5f3f"/><path d="M1 6l11 6v4l-3-3-3 1-2-4-3 1zM23 6l-11 6v4l3-2 2-3 3 1 3-2z" fill="#4f9434"/><path d="M3 14h2v2H3zM8 18h2v2H8zM15 18h2v2h-2zM19 13h2v2h-2z" fill="#3f2a1e"/>`,
  chrome,
  netflix: `<path d="M0 0h24v24H0z" fill="#000"/><path d="M6 0h4v24H6zM14 0h4v24h-4z" fill="#a80a13"/><path d="M6 0h4l8 24h-4z" fill="#e8121e"/>`,
  folder: `<path d="M0 2h9l2 3H0z" fill="#d99b13"/><path d="M0 5q0-1 1-1h22l1 1v18H0z" fill="#fbcf51"/><path d="M0 8h24v15H0z" fill="#f8c33f"/><path d="M4 24v-6l2-2h12l2 2v6z" fill="#1273c4"/><path d="M7 19h10v2H7z" fill="#0a5598"/>`,
  xbox: `<path d="M0 0h24v24H0z" fill="#137c13"/><circle cx="12" cy="12" r="9.500" fill="#fff"/><path d="M4 19q3-8 8-11 5 3 8 11-3-1-8-7-5 6-8 7zM6 4q4 0 6 2 2-2 6-2-6-3-12 0z" fill="#137c13"/>`,
  head: `<defs><linearGradient id="hg" x1="0" y1="1" x2="1" y2="0"><stop offset="0" stop-color="#0a4cff"/><stop offset=".5" stop-color="#a12c90"/><stop offset="1" stop-color="#ff2020"/></linearGradient></defs><path d="M0 0h24v24H0z" fill="url(#hg)"/><path d="M8 20v-3Q3 9 8.500 5.500T18.500 9q1 5-3 8v3M9 17v-6q3-5 6 0v6M8 20h8M9 14h6M9 17h6" fill="none" stroke="#fff" stroke-width="1.200"/>`,
  opera: `<circle cx="12" cy="12" r="11" fill="none" stroke="#cc1840" stroke-width="1.600"/><ellipse cx="10" cy="12" rx="5.500" ry="10" fill="none" stroke="#cc1840" stroke-width="1.300"/><ellipse cx="14" cy="12" rx="5.500" ry="10" fill="none" stroke="#cc1840" stroke-width="1.300"/>`,
  maya: mayaLogo('#36a4d2'),
  weather: `<circle cx="15" cy="7" r="7" fill="#f19a1e"/><path d="M5 22a5 5 0 0 1-1-10 7 7 0 0 1 13-2 6 6 0 0 1 2 12z" fill="#a9c8f5"/><path d="M5 22a5 5 0 0 1-4-7q10 5 22 0 0 5-4 7z" fill="#87aee8"/>`,
  up: `<path d="M6 15l6-6 6 6" fill="none" stroke="#fff" stroke-width="1.800"/>`,
  wifi: `<path d="M4 10q8-7 16 0M6.500 13q5.500-5 11 0M9 16q3-3 6 0" fill="none" stroke="#fff" stroke-width="1.500"/><circle cx="12" cy="18" r="1.500" fill="#fff"/>`,
  vol: `<path d="M4 9.500h3l4-4v13l-4-4H4z" fill="none" stroke="#fff" stroke-width="1.300"/><path d="M13.500 9q2 3 0 6M16 7q3.500 5 0 10" fill="none" stroke="#fff" stroke-width="1.300"/><path d="M18.500 5q4.500 7 0 14" fill="none" stroke="#777" stroke-width="1.200"/>`,
  batt: `<path d="M9 7.500h11v9H5v-4" fill="none" stroke="#fff" stroke-width="1.400"/><path d="M9.500 9.500h9v5.500H7v-2z" fill="#fff"/><path d="M21 10h1.500v4H21z" fill="#fff"/><path d="M8 3l-4 6h3l-1 5 4-6H7z" fill="#fff"/>`,
}

const Ico = (p: { n: string; b?: number; s?: number; w?: number }) =>
  h('svg', {
    class: 'ico',
    viewBox: `0 0 ${p.b ?? 24} ${p.b ?? 24}`,
    width: p.w ?? p.s ?? p.b ?? 24,
    height: p.s ?? p.b ?? 24,
    preserveAspectRatio: 'none',
    innerHTML: icons[p.n],
  })
Ico.props = ['n', 'b', 's', 'w']

/* Tracks text out (or in) so that a label fills the given length. */
const vFit = {
  mounted(el: HTMLElement, { value, arg }: { value: number; arg?: string }) {
    const range = document.createRange()
    range.selectNodeContents(el)
    const box = range.getBoundingClientRect()
    const size = arg === 'v' ? box.height : box.width
    el.style.letterSpacing = `${(value - size) / (el.textContent ?? ' ').length}px`
  },
}

type Label = [string, number]
const menus: Label[] = [['File', 18], ['Edit', 20], ['Create', 33], ['Select', 30], ['Modify', 36], ['Display', 37], ['Windows', 49], ['Mesh', 28], ['Edit Mesh', 51], ['Mesh Tools', 58], ['Mesh Display', 68], ['Curves', 34], ['Surfaces', 43], ['Deform', 38], ['UV', 15], ['Generate', 47], ['Cache', 31], ['Arnold', 35], ['Help', 23]]
const fileIcons = ['new', 'open', 'save', 'undo', 'redo']
const renderIcons = ['r1', 'r2', 'r3', 'r4', 'r5', 'r6', 'r7', 'r8']
const rightIcons = ['w1', 'w2', 'w3', 'w4', 'w5']
const tabs: [string, number, number][] = [['Curves / Surfaces', 108.5, 86], ['Poly Modeling', 97, 74], ['Sculpting', 71, 49], ['Rigging', 63, 41], ['Animation', 74, 53], ['Rendering', 76, 54], ['FX', 34, 12.5], ['FX Caching', 79, 56], ['Custom', 61.5, 39], ['Arnold', 57, 35.5], ['MASH', 53, 31], ['Motion Graphics', 108, 85.5], ['XGen', 49, 27], ['TURTLE', 60, 38.5]]
const shelf = ['sphere', 'cube', 'cylinder', 'cone', 'torus', 'plane', 'disc', '|', 'icosa', '|', 'star', 'spiral', 'type', 'svg', '|', 'gridwin', '|', 'target', 'history', 'freeze', '|', 'bool', 'combine', 'separate', 'mirror', 'smooth', 'reduce', 'remesh', 'retopo', '|', 'extrude', 'bridge', 'bevel', 'merge', 'wheel', 'flip', 'collapse', 'cage', 'project', '|', 'multicut', 'edgeloop', 'quaddraw', '|', 'uv1', 'uv2', 'uv3', 'uv4', 'uv5', 'uv6', 'uv7', 'uv8']
const tools = ['arrow', 'lasso', 'paint', 'move', 'rotate', 'scale']
const layouts = ['lay1', 'lay2', 'lay3', 'lay4']
const nodes: [string, string, number][] = [['cam', 'persp', 29], ['cam', 'top', 18], ['cam', 'front', 26], ['cam', 'side', 21], ['mesh', 'Table_Top', 51], ['mesh', 'Table_Leg2', 56], ['cam', 'bottom', 38], ['mesh', 'Table_Leg3', 56], ['mesh', 'Table_Leg4', 56], ['mesh', 'Table_Leg5', 56], ['set', 'defaultLightSet', 78.5], ['set', 'defaultObjectSet', 86.5]]
const outMenus: Label[] = [['Display', 37], ['Show', 29], ['Help', 24]]
const panelMenus: Label[] = [['View', 25], ['Shading', 43], ['Lighting', 43], ['Show', 29], ['Renderer', 47], ['Panels', 33]]
const panelIcons = '| v1 v2 v3 v4 v5 | v6 v7 v8 v9 v10 v11 v12 | v13 v14 v15 v16 v17 v18 v19 | v20 v21 v22 v23 v24 v25 v26 | v27 v28 v29 v30 | v31 | v32 v33 v34 |'.split(' ')
const lit = ['v13', 'v21', 'v24']
const createButtons: Label[] = [['Create Skeleton', 81], ['Create Control Rig', 95], ['Create Character Definition', 140], ['Create Custom Rig Mapping', 145], ['Quick Rig Tool', 74.5]]
const importButtons: Label[] = [['Import Human IK Example', 131], ['Import Animation Example', 135]]
const sideTabs: [string, number, number][] = [['Channel Box / Layer Editor', 155.5, 133], ['Attribute Editor', 103, 80], ['Modeling Toolkit', 110.5, 87], ['Graph Editor', 88.5, 65.5], ['Human IK', 70, 48.5]]
const play = ['p1', 'p2', 'p3', 'p4', 'p5', 'p6', 'p7', 'p8']
const tasks = ['taskview', 'chat', 'store', 'mail', 'spotify', 'steam', 'monitor', 'discord', 'minecraft', 'chrome', 'netflix', 'folder', 'xbox', 'head', 'opera', 'chrome', 'maya']
const badges: Record<number, string> = { 2: '1', 12: '1', 15: 'B' }
const running = [4, 11, 15]

/* scene */
const vLines = Array.from({ length: 18 }, (_, i) => 370.5 + i * 70).filter((x) => Math.abs(x - 930) > 5)
const hLines = Array.from({ length: 10 }, (_, i) => 259.5 + i * 70).filter((y) => Math.abs(y - 610) > 5).map((y) => (y > 610 ? y + 1 : y))
const seams = [
  'M-75.300-158.300L-63.300-133-27-121.500-11.700-130 0-140',
  'M-143.300-135.500L-121.700-114-102-111-81.300-110-69.300-122.500-63.300-133',
  'M-121.700-114L-122.300-102-127.300-87-150.700-83-167.300-83-161.300-66.500-161.300-56-178.300-48.500-196-43.500-232.700-52',
  'M-196-43.500L-186-32-178.700-19.500-190-10-204.700-1',
  'M-167.300-83L-173-85',
]
const quadrants = ['', 'translate(1.5 0) scale(-1 1)', 'scale(1 -1)', 'translate(1.5 0) scale(-1 -1)']
const legs = [[744, 522.3], [744.7, 695.7], [1115.3, 522.3], [1118, 697]]
const spokes = Array.from({ length: 20 }, (_, i) => {
  const a = (i * Math.PI) / 10
  return `M${(4 * Math.cos(a)).toFixed(1)} ${(4 * Math.sin(a)).toFixed(1)}L${(14.5 * Math.cos(a)).toFixed(1)} ${(16.5 * Math.sin(a)).toFixed(1)}`
}).join('')
</script>

<template>
  <div class="app">
    <header class="title">
      <Ico n="maya" :s="16" :w="12" />
      <span v-fit="781">Table UVs.ma* - Autodesk MAYA 2023.3: D:\School\Modeling and Surfacing Essentials\1660-Summer-2023\Challenge 2 - UV Mapping\Table UVs.ma</span>
      <svg class="wbtns" viewBox="0 0 110 20" width="110" height="20">
        <path d="M5 8.500h10M50.500 7.500h6.500v6.500h-6.500zM52.500 7V5h7v7H57.500M96.500 4.500l9 9M105.500 4.500l-9 9" fill="none" stroke="#111" stroke-width="1.100" />
      </svg>
    </header>

    <nav class="menubar">
      <span v-for="[t, w] in menus" :key="t" v-fit="w">{{ t }}</span>
      <div class="workspace">
        <span v-fit="59">Workspace:</span>
        <div class="combo ws"><span v-fit="40">General</span><i class="arr"></i></div>
        <Ico n="lock" :b="20" :s="18" />
      </div>
    </nav>

    <div class="status">
      <i class="dots"></i>
      <div class="combo mode"><span v-fit="50">Modeling</span><i class="arr"></i></div>
      <i class="grip g1"></i>
      <div class="group"><Ico v-for="i in fileIcons" :key="i" :n="i" :b="20" :s="19" /></div>
      <div class="chevs"><Ico v-for="i in 6" :key="i" n="chev" :b="20" /></div>
      <i class="grip g2"></i>
      <div class="group rend"><Ico v-for="i in renderIcons" :key="i" :n="i" :b="20" :s="20" /></div>
      <i class="grip g3"></i>
      <Ico n="caret" :b="20" :s="18" class="caret" />
      <div class="field status-field"></div>
      <i class="grip g4"></i>
      <div class="user"><Ico n="user" :b="20" :s="16" /><span v-fit="65">Bryan Powell</span><i class="arr"></i></div>
      <div class="right-icons"><span v-for="i in rightIcons" :key="i" :class="{ on: i === 'w2' }"><Ico :n="i" :b="20" :s="19" /></span></div>
    </div>
    <div class="rule"></div>

    <section class="shelf">
      <i class="dots"></i>
      <div class="shelf-ctl"><i class="burger"></i><Ico n="cog" :b="20" :s="11" /></div>
      <div class="shelf-main">
        <div class="tabs">
          <div v-for="([t, w, f], i) in tabs" :key="t + i" class="tab" :class="{ active: i === 1 }" :style="{ width: w + 'px' }"><span v-fit="f">{{ t }}</span></div>
        </div>
        <div class="shelf-row">
          <div class="cells">
            <span v-for="(i, k) in shelf" :key="k" class="cell"><i v-if="i === '|'" class="sep"></i><Ico v-else :n="i" :s="25" :w="24" /></span>
          </div>
          <div class="scrollbox"><i class="tri up"></i><i class="knob"></i><i class="tri down"></i></div>
        </div>
      </div>
    </section>
    <div class="rule"></div>

    <main class="work">
      <aside class="toolbox">
        <i class="hdots"></i>
        <span v-for="i in tools" :key="i" class="tool" :class="{ on: i === 'arrow' }"><Ico :n="i" :b="32" :s="32" /></span>
        <i class="hsep first"></i>
        <span v-for="i in layouts" :key="i" class="tool" :class="{ on: i === 'lay4' }"><Ico :n="i" :b="32" :s="32" /></span>
        <i class="hsep"></i>
        <span class="tool search-tool"><Ico n="find" :b="32" :s="32" /></span>
        <Ico n="maya" :s="32" :w="29" class="biglogo" />
      </aside>

      <aside class="outliner">
        <div class="out-tabs"><div class="out-tab"><span v-fit="43">Outliner</span></div></div>
        <div class="out-menu"><span v-for="[t, w] in outMenus" :key="t" v-fit="w">{{ t }}</span></div>
        <div class="out-search"><Ico n="filt" :b="16" :s="16" /><div class="field"><span v-fit="43">Search...</span><i class="arr light"></i></div></div>
        <div class="out-body">
          <div class="out-list">
            <div class="nodes">
              <div v-for="[k, t, w] in nodes" :key="t" class="node" :class="k"><Ico :n="k" :b="16" /><span v-fit="w">{{ t }}</span></div>
            </div>
            <div class="vscroll"><i class="tri up"></i><i class="bar"></i><i class="tri down"></i></div>
          </div>
          <div class="hscroll"><i class="tri left"></i><i class="bar"></i><i class="tri rightw"></i></div>
        </div>
        <i class="foot-dots"></i>
      </aside>

      <section class="panel">
        <div class="panel-menu"><span v-for="[t, w] in panelMenus" :key="t" v-fit="w">{{ t }}</span></div>
        <div class="panel-bar">
          <template v-for="(i, k) in panelIcons" :key="k">
            <i v-if="i === '|'" class="pgrip"></i>
            <span v-else class="pico" :class="{ on: lit.includes(i) }"><Ico :n="i" :b="18" :s="18" :w="17" /></span>
          </template>
          <span class="pico"><Ico n="v35" :b="18" :s="17" /></span>
          <div class="num"><span v-fit="21">0.00</span></div>
          <span class="pico"><Ico n="v36" :b="18" :s="16" /></span>
          <div class="num"><span v-fit="21">1.00</span></div>
          <span class="pico on cm"><Ico n="v37" :b="18" :s="17" /></span>
          <div class="combo aces"><span v-fit="135">ACES 1.0 SDR-video (sRGB)</span><i class="arr"></i></div>
        </div>
        <svg class="scene" viewBox="318 192 1289 762" width="1289" height="762">
          <rect x="318" y="192" width="1289" height="762" fill="#5c5c5c" />
          <ellipse cx="930.600" cy="610.200" rx="246.600" ry="166.500" fill="#7a7cac" />
          <g fill="none" stroke="#5cd8f8" stroke-width="1.100" transform="translate(930 610.200)">
            <g v-for="q in quadrants" :key="q" :transform="q"><path v-for="s in seams" :key="s" :d="s" /></g>
          </g>
          <ellipse cx="930.600" cy="610.200" rx="246.600" ry="166.500" fill="none" stroke="#d2d2d2" stroke-width="2.400" />
          <g stroke="#414141" shape-rendering="crispEdges">
            <path v-for="x in vLines" :key="x" :d="`M${x} 192V954`" />
            <path v-for="y in hLines" :key="y" :d="`M318 ${y}H1607`" />
            <path d="M930 192V954M318 610H1607" stroke="#3c3c3c" stroke-width="2" />
          </g>
          <g v-for="[x, y] in legs" :key="x" :transform="`translate(${x} ${y})`" fill="none">
            <ellipse rx="14.500" ry="16.500" fill="#6076a2" stroke="#5cd8f8" stroke-width="1.400" />
            <ellipse rx="13" ry="14.800" stroke="#0b1c2c" stroke-width="1.400" stroke-dasharray="1.600 2.400" />
            <path :d="spokes" stroke="#5cd8f8" stroke-width="1" stroke-dasharray="3 1" />
            <ellipse rx="11.500" ry="13.200" stroke="#5cd8f8" stroke-dasharray="3 1" />
            <ellipse rx="9" ry="10.300" stroke="#5cd8f8" stroke-dasharray="2 1" />
            <ellipse rx="6.200" ry="7.200" stroke="#5cd8f8" stroke-dasharray="2 1" />
            <path d="M3 1l11 4" stroke="#d8d8d8" stroke-width="1.500" />
            <circle r="2.200" stroke="#dadada" stroke-width="2" />
          </g>
          <path d="M343.500 928v-13" stroke="#0d0dd8" stroke-width="1.300" />
          <path d="M343 926h13" stroke="#d01414" stroke-width="1.300" />
          <path d="M341.500 921v7h4" stroke="#18b018" fill="none" />
          <text x="341" y="911" class="ax z">z</text>
          <text x="356" y="929" class="ax x">x</text>
          <text x="932" y="945" class="cam-name" textLength="44">bottom Y</text>
        </svg>
      </section>

      <aside class="hik">
        <div class="hik-head">
          <svg width="39" height="39" viewBox="0 0 39 37" preserveAspectRatio="none">
            <defs><linearGradient id="hk" x1="0" y1="0" x2="0" y2="1"><stop offset="0" stop-color="#0b94dc" /><stop offset=".5" stop-color="#066096" /><stop offset="1" stop-color="#02141f" /></linearGradient></defs>
            <rect x=".5" y=".5" width="38" height="36" rx="2" fill="url(#hk)" stroke="#222" />
            <path d="M19 1A19 19 0 0 1 1 33" fill="none" stroke="#e4eef4" stroke-width="1.500" />
            <circle cx="4" cy="6" r="2.300" fill="#fff" />
            <path d="M1 9h6l11-4v2L8 12l1 8 3 9-2 1-5-9-4 8z" fill="#fff" />
            <path d="M28 17h8l-4 4z" fill="#fff" />
          </svg>
          <div class="hik-fields">
            <div class="hik-line"><span v-fit="51" class="lbl">Character:</span><div class="combo hc"><span v-fit="28">None</span><i class="arr"></i></div></div>
            <div class="hik-line off"><span v-fit="37" class="lbl">Source:</span><div class="combo hc"><span v-fit="28">None</span><i class="arr"></i></div></div>
          </div>
        </div>
        <div class="fold"><i class="arr white"></i><b v-fit="33">Create</b></div>
        <div class="btns"><button v-for="[t, w] in createButtons" :key="t"><span v-fit="w">{{ t }}</span></button></div>
        <div class="fold"><i class="arr white"></i><b v-fit="82">Import Samples</b></div>
        <div class="btns"><button v-for="[t, w] in importButtons" :key="t"><span v-fit="w">{{ t }}</span></button></div>
      </aside>
      <nav class="side">
        <div v-for="[t, hh, f] in sideTabs" :key="t" class="stab" :class="{ active: t === 'Human IK' }" :style="{ height: hh + 'px' }"><span v-fit:v="f">{{ t }}</span></div>
      </nav>
    </main>
    <div class="rule"></div>

    <section class="time">
      <i class="dots"></i>
      <div class="slider">
        <div v-for="i in 10" :key="i" class="frame" :class="{ cur: i === 1 }"><span class="no">{{ i }}</span><span v-if="i === 1" class="now">1</span></div>
      </div>
      <div class="field frame-field">1</div>
      <div class="play"><Ico v-for="i in play" :key="i" :n="i" :b="20" /></div>
    </section>
    <div class="rule"></div>

    <section class="cmd">
      <i class="dots"></i>
      <Ico n="help" :b="20" :s="18" />
      <span v-fit="138" class="msg">Select Tool: select a component</span>
      <div class="mel"><i class="dots two"></i><span v-fit="20">MEL</span></div>
      <div class="field c1"></div>
      <i class="dots"></i>
      <div class="field c2"></div>
      <Ico n="script" :b="20" />
    </section>

    <footer class="taskbar">
      <div class="weather">
        <div class="wicon"><Ico n="weather" :s="24" /><em>1</em></div>
        <div class="wtext"><span v-fit="24">73°F</span><span v-fit="75" class="dim">Mostly cloudy</span></div>
      </div>
      <Ico n="win" :s="23" class="win" />
      <div class="search"><Ico n="mag" :s="16" /><span v-fit="41">Search</span><Ico n="bing" :s="20" class="bing" /></div>
      <div class="tasks">
        <div v-for="(t, i) in tasks" :key="i" class="task" :class="{ current: t === 'maya', run: running.includes(i) }"><Ico :n="t" :s="24" :w="t === 'maya' ? 22 : 24" /><em v-if="badges[i]" :class="{ pink: badges[i] === 'B' }">{{ badges[i] }}</em></div>
      </div>
      <div class="tray"><Ico n="up" /><Ico n="wifi" class="wf" /><Ico n="vol" /><Ico n="batt" /></div>
      <div class="clock"><span v-fit="43">3:53 PM</span><span v-fit="49">6/1/2023</span></div>
      <div class="count">2</div>
    </footer>
  </div>
</template>

<style>
body { background: #444; overflow: hidden; }
</style>

<style scoped>
.app { width: 1914px; height: 1080px; display: flex; flex-direction: column; overflow: hidden; background: #444; color: #c6c6c6; font: 11px/14px "Noto Sans", "Open Sans", sans-serif; white-space: nowrap; cursor: default; }
.app * { box-sizing: border-box; }
.app i, .app em { font-style: normal; display: block; flex: none; }
.ico { flex: none; display: block; overflow: visible; }
.rule { height: 2px; flex: none; background: #373737; }
.title { height: 23px; flex: none; display: flex; align-items: center; gap: 6px; color: #111; font-family: "Open Sans", sans-serif; font-size: 12px; background: linear-gradient(90deg, #f2f3f8 0, #f6f2f2 20%, #faefec 45%, #faf0ea 72%, #f3f3ea 82%, #f2f4ee 100%); }
.wbtns { margin-left: auto; margin-right: 15px; }
.menubar { height: 26px; flex: none; display: flex; align-items: center; gap: 15px; padding: 1px 0 0 3px; }
.workspace { margin-left: auto; margin-right: 5px; display: flex; align-items: center; gap: 4px; }
.workspace .ico { margin-left: 2px; }
.combo { display: flex; align-items: center; justify-content: space-between; background: #5d5d5d; border-radius: 2px; padding: 1px 0 0 3px; }
.ws { width: 192px; height: 19px; }
.arr { width: 20px; align-self: stretch; border-left: 1px solid #4b4b4b; }
.arr::after { content: ""; display: block; width: 10px; height: 6px; margin: 5px 0 0 5px; background: #bdbdbd; clip-path: polygon(0 0, 100% 0, 50% 100%); }
.status { height: 28px; flex: none; display: flex; align-items: center; }
.dots { width: 2px; height: 26px; background: repeating-linear-gradient(180deg, #777 0 1px, transparent 1px 4px); }
.mode { width: 98px; height: 20px; margin-left: 6px; }
.grip { width: 3px; height: 20px; background: linear-gradient(#868686, #868686) 1px 0 / 1px 20px no-repeat, linear-gradient(#868686, #868686) 0 5px / 3px 11px no-repeat; }
.g1 { margin-left: 9px; }
.group { display: flex; gap: 4px; margin-left: 12px; }
.chevs { display: flex; gap: 2px; margin-left: 4px; }
.g2 { margin-left: 9px; }
.rend { gap: 3px; margin-left: 11px; }
.g3 { margin-left: 11px; }
.caret { margin-left: 19px; }
.field { background: #2b2b2b; border-radius: 2px; }
.status-field { width: 164px; height: 18px; margin: 0 0 2px 10px; }
.g4 { margin-left: 11px; }
.user { width: 120px; height: 22px; margin-left: 10px; background: #5d5d5d; display: flex; align-items: center; padding-left: 3px; gap: 4px; color: #eee; }
.user .arr { margin-left: auto; border: 0; width: 15px; }
.user .arr::after { background: #eee; margin: 8px 0 0 2px; }
.right-icons { margin-left: auto; margin-right: 2px; display: flex; }
.right-icons span { width: 23px; height: 22px; display: grid; place-items: center; }
.on { background: #5285a6; }
.shelf { height: 68px; flex: none; display: flex; padding-top: 2px; }
.shelf .dots { height: 60px; margin-top: 1px; }
.shelf-ctl { width: 20px; height: 63px; margin-left: 6px; background: #373737; display: flex; flex-direction: column; align-items: center; gap: 26px; padding-top: 12px; }
.burger { width: 10px; height: 5px; border: solid #8c8c8c; border-width: 2px 0; }
.shelf-main { flex: 1; margin: 1px 3px 0 3px; display: flex; flex-direction: column; }
.tabs { height: 18px; background: #373737; display: flex; gap: 2px; padding: 2px 0 0 1px; }
.tab { height: 16px; background: #3b3b3b; border: 1px solid #2d2d2d; border-bottom: 0; border-radius: 3px 3px 0 0; color: #939393; display: flex; justify-content: center; align-items: center; flex: none; padding-top: 1px; }
.tab.active { background: #444; color: #fff; border-color: #444; }
.shelf-row { display: flex; align-items: center; height: 42px; justify-content: space-between; }
.cells { display: flex; margin-left: 5px; }
.cell { width: 34.83px; height: 35px; display: grid; place-items: center; }
.sep { width: 2px; height: 35px; background: #969696; }
.scrollbox { width: 12px; height: 35px; margin-right: 5px; background: #373737; display: flex; flex-direction: column; align-items: center; justify-content: space-between; padding: 3px 0; }
.knob { width: 10px; height: 10px; border-radius: 5px; background: #5d5d5d; }
.tri { width: 9px; height: 5px; background: #b5b5b5; }
.up { clip-path: polygon(50% 0, 100% 100%, 0 100%); }
.down { clip-path: polygon(0 0, 100% 0, 50% 100%); }
.left { width: 5px; height: 9px; clip-path: polygon(100% 0, 100% 100%, 0 50%); }
.rightw { width: 5px; height: 9px; clip-path: polygon(0 0, 100% 50%, 0 100%); }
.work { flex: 1; min-height: 0; display: flex; background: #373737; }
.toolbox { width: 38px; background: #444; display: flex; flex-direction: column; padding-top: 2px; }
.hdots { width: 32px; height: 5px; margin: 1px 0 4px 2px; background: radial-gradient(circle, #888 30%, transparent 40%) 0 0 / 3px 3px; }
.tool { width: 34px; height: 36px; margin-bottom: 1px; display: grid; place-items: center start; flex: none; }
.hsep { width: 34px; height: 2px; background: #969696; margin: 4px 0 5px; flex: none; }
.hsep.first { margin: 78px 0 5px; }
.biglogo { margin: auto 0 7px 1px; }
.outliner { width: 272px; margin-left: 2px; background: #444; display: flex; flex-direction: column; }
.out-tabs { height: 18px; background: #373737; padding: 2px 0 0 2px; }
.out-tab { width: 64px; height: 17px; background: #444; border-radius: 3px 3px 0 0; color: #f0f0f0; padding: 2px 0 0 10px; }
.out-menu { display: flex; gap: 15px; padding: 4px 0 0 11px; height: 27px; }
.out-search { display: flex; align-items: center; padding-left: 9px; gap: 6px; height: 18px; }
.out-search .field { width: 236px; height: 18px; display: flex; justify-content: space-between; padding: 2px 0 0 3px; color: #8a8a8a; }
.arr.light { border: 0; width: 16px; }
.arr.light::after { margin: 4px 0 0 2px; background: #d0d0d0; }
.out-body { width: 264px; height: 734px; margin: 2px 0 0 4px; background: #373737; display: flex; flex-direction: column; }
.out-list { flex: 1; display: flex; justify-content: space-between; }
.node { height: 20px; display: flex; align-items: center; gap: 2.200px; padding-left: 36px; color: #cfcfcf; }
.node.cam { color: #6c6c6c; }
.node.set { padding-left: 35px; gap: 3.500px; }
.node.mesh { padding-left: 35px; gap: 2.800px; }
.vscroll { width: 10px; display: flex; flex-direction: column; align-items: center; padding: 3px 0 6px; gap: 5px; }
.vscroll .bar { flex: 1; width: 10px; border-radius: 4px; background: #5d5d5d; }
.hscroll { height: 10px; display: flex; align-items: center; gap: 5px; padding: 0 16px 0 3px; }
.hscroll .bar { flex: 1; height: 10px; border-radius: 4px; background: #5d5d5d; }
.foot-dots { width: 86px; height: 1px; margin: 2px 0 0 92px; background: repeating-linear-gradient(90deg, #888 0 1px, transparent 1px 3px); }
.panel { width: 1291px; height: 803px; margin: 3px 0 0 5px; border: 1px solid #858585; background: #444; display: flex; flex-direction: column; flex: none; box-shadow: -3px 0 0 #444, 0 4px 0 #444; }
.panel-menu { display: flex; gap: 15px; height: 18px; padding: 2px 0 0 8px; }
.panel-bar { height: 21px; display: flex; align-items: center; padding-bottom: 1px; }
.pgrip { width: 3px; height: 15px; margin: 0 4px 0 3.700px; background: linear-gradient(#808080, #808080) 1px 0 / 1px 15px no-repeat, linear-gradient(#868686, #868686) 0 3px / 3px 9px no-repeat; }
.pico { width: 19px; height: 19px; display: grid; place-items: center; flex: none; }
.num { width: 38px; height: 15px; background: #2b2b2b; border-radius: 2px; padding: 1px 0 0 5px; margin: 0 1px 1px 2px; line-height: 14px; flex: none; }
.cm { margin-left: 2px; }
.aces { width: 198px; height: 17px; margin-left: 3px; padding-top: 0; }
.scene { display: block; flex: none; }
.ax { font: bold 8px "Liberation Sans", sans-serif; }
.ax.z { fill: #0c0ce0; }
.ax.x { fill: #d41414; }
.cam-name { font: bold 10px "Liberation Sans", sans-serif; fill: #f2f2f2; }
.hik { width: 285px; margin-left: 5px; background: #444; display: flex; flex-direction: column; padding: 7px 8px 0 9px; }
.hik-head { display: flex; justify-content: space-between; height: 51px; margin-left: -2px; }
.hik-head svg { margin-top: 1px; }
.hik-fields { display: flex; flex-direction: column; gap: 3px; margin-right: 2px; }
.hik-line { display: flex; align-items: center; justify-content: flex-end; gap: 5px; height: 19px; }
.hc { width: 152px; height: 19px; }
.off { color: #7d7d7d; }
.off .hc { background: #494949; color: #5f5f5f; padding-left: 6px; }
.off .arr { border-color: #494949; }
.off .arr::after { background: #777; }
.fold { height: 20px; border-radius: 2px; background: #5d5d5d; display: flex; align-items: center; color: #bdbdbd; gap: 8px; }
.arr.white { border: 0; }
.arr.white::after { background: #eee; width: 11px; margin-left: 7px; }
.btns { display: flex; flex-direction: column; gap: 5px; padding: 6px 30px; }
button { height: 23px; flex: none; border: 1px solid #646464; border-radius: 1px; background: #5d5d5d; color: #eee; font: inherit; padding: 0; }
.side { width: 16px; display: flex; flex-direction: column; gap: 1px; padding-top: 2px; }
.stab { background: #3b3b3b; border: 1px solid #2d2d2d; border-left: 0; border-radius: 0 3px 3px 0; writing-mode: vertical-rl; display: flex; align-items: center; justify-content: center; color: #979797; flex: none; line-height: 13px; }
.stab.active { background: #444; border-color: #444; color: #f2f2f2; }
.time { height: 38px; flex: none; display: flex; align-items: center; }
.time .dots { height: 34px; }
.slider { width: 1612px; height: 30px; margin: 0 0 0 5px; background: #2b2b2b; border-bottom: 3px solid #383838; display: flex; padding-left: 6px; flex: none; align-items: stretch; }
.frame { width: 159.800px; flex: none; display: flex; flex-direction: column; padding-left: 28.500px; color: #7f7f7f; line-height: 12px; background: linear-gradient(#858585, #858585) 0 13px / 2px 13px no-repeat; }
.frame span { width: 12px; text-align: center; }
.frame.cur { background: linear-gradient(#858585, #858585) 0 13px / 2px 13px no-repeat, linear-gradient(#545454, #545454) 1px 0 / 158px 30px no-repeat; height: 30px; }
.frame:nth-child(10) .no { width: 16px; }
.now { color: #fff; }
.frame-field { width: 88px; height: 18px; margin-left: 7px; color: #c8c8c8; padding: 3px 0 0 5px; }
.play { display: flex; gap: 3px; margin-left: 8px; margin-top: -1px; }
.cmd { height: 33px; flex: none; display: flex; align-items: center; padding-bottom: 1px; color: #eee; }
.cmd > .ico { margin-left: 5px; }
.msg { font: 10px/14px "Noto Sans", sans-serif; margin-left: 7px; flex: 0 0 777px; }
.mel { border-left: 2px solid #373737; height: 31px; display: flex; align-items: center; width: 61px; flex: none; }
.mel .dots { width: 5px; margin: 0 18px 0 2px; background: radial-gradient(circle, #888 30%, transparent 40%) 0 0 / 4px 4px; }
.c1 { width: 409px; height: 22px; flex: none; }
.c1 + .dots { margin-left: 3px; height: 11px; }
.c2 { width: 594px; height: 20px; margin-left: 2px; flex: none; }
.taskbar { height: 47px; flex: none; display: flex; align-items: center; color: #fff; font-family: "Open Sans", sans-serif; background: linear-gradient(90deg, #242021 0, #242021 28%, #2c2023 42%, #2e2024 68%, #252122 84%, #242122 100%); }
.weather { width: 457px; display: flex; padding-left: 13px; gap: 6px; }
.wicon { position: relative; width: 25px; height: 34px; padding-top: 7px; }
.wicon em, .task em { position: absolute; right: -4px; top: -1px; width: 16px; height: 16px; border-radius: 8px; background: #ff9a9c; color: #222; font-size: 11px; line-height: 16px; text-align: center; }
.wicon em { right: -3px; top: 0; }
.wtext { display: flex; flex-direction: column; gap: 2px; font-size: 11.500px; line-height: 14px; padding-top: 3px; }
.dim { color: #d2d2d2; }
.win { margin-top: -1px; }
.search { width: 220px; height: 32px; margin-left: 13px; margin-top: -1px; border-radius: 16px; background: #433c3e; border: 1px solid #5a5355; display: flex; align-items: center; padding: 0 5px 0 11px; gap: 9px; font-size: 13px; color: #ddd; }
.bing { margin-left: auto; }
.tasks { display: flex; margin-left: 2px; }
.task { width: 44px; height: 40px; display: grid; place-items: center; position: relative; margin-top: -2px; }
.task em { right: 2px; top: 1px; background: #fdd02c; }
.task em.pink { background: #e23c7a; color: #f8c8d8; font-size: 10px; right: 4px; }
.task::after { content: ""; position: absolute; bottom: -1px; width: 0; height: 3px; border-radius: 2px; background: #999; left: 50%; transform: translateX(-50%); }
.run::after { width: 6px; }
.current { background: #3c3335; border-radius: 4px; background-clip: content-box; padding: 0 2px; }
.current::after { width: 16px; background: #fdd02c; }
.tray { display: flex; margin-left: auto; }
.tray .wf { margin-left: 9px; }
.clock { display: flex; flex-direction: column; align-items: flex-end; width: 57px; gap: 2px; font-size: 11.500px; line-height: 14px; margin-left: 3px; }
.count { width: 16px; height: 16px; margin: 0 20px 0 8px; border-radius: 8px; background: #fdd02c; color: #222; font-size: 10.500px; line-height: 16px; text-align: center; }
</style>
